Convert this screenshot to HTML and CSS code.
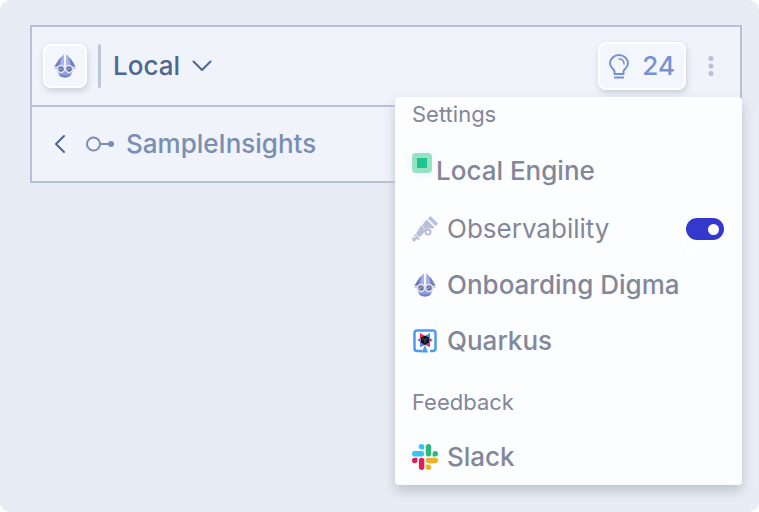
FILE: index.html
```html
<!DOCTYPE html>
<html lang="en">
<head>
<meta charset="utf-8">
<title>Digma</title>
<link rel="stylesheet" href="styles.css">
</head>
<body>
<svg class="sprite" aria-hidden="true">
  <symbol id="mascot" viewBox="0 0 26 26">
    <path d="M12 1.500 7 6 4 11l-2 4 4 2 6-2zM14.500 1.500 19 6l3 5 2 4-4 2-6-2z" fill="#929fdf"/>
    <path d="M8.500 5 4 11l-2 4 5-1zM18 5l4 6 2 4-5-1z" fill="#727db5"/>
    <path d="M11 2.500 8.500 13H12V1.500zM15.500 2.500 18 13h-3.500V1.500z" fill="#aab5ee"/>
    <path d="M5 17q8-4 16 0l-2 5q-6 5-12 0z" fill="#8e9ce0"/>
    <path d="M7 21.500q6 2 12 0-1 3-6 3t-6-3z" fill="#7480c2"/>
    <path d="M2 14.500h22" stroke="#e3e7f5" stroke-width="1.500"/>
    <circle cx="9" cy="16" r="3.500" fill="#6873a5" stroke="#e3e7f5" stroke-width="1.500"/>
    <circle cx="17" cy="16" r="3.500" fill="#6873a5" stroke="#e3e7f5" stroke-width="1.500"/>
    <path d="M7 17l3-2M15 17l3-2" stroke="#b3bde0"/>
  </symbol>
</svg>
<main class="stage">
  <section class="panel">
    <header class="row top-row">
      <button class="tile" aria-label="Digma"><svg class="icon"><use href="#mascot"/></svg></button>
      <span class="divider"></span>
      <button class="env">Local
        <svg width="20" height="12" viewBox="0 0 20 12" fill="none" stroke="currentColor" stroke-width="2" stroke-linecap="round" stroke-linejoin="round"><path d="M1.500 1.500 10 10l8.500-8.500"/></svg>
      </button>
      <button class="insights">
        <svg width="20" height="25" viewBox="0 0 20 25" fill="none" stroke="currentColor" stroke-width="2"><path d="M5.500 20v-2.500C5.500 15 1 14 1 9.500a9 8.500 0 0 1 18 0c0 4.500-4.500 5.500-4.500 8V20z" stroke-linejoin="round"/><path d="M10 5c3 0 5 2 5 5" stroke-width="1.500" stroke-linecap="round"/><path d="M5 23.500h10"/></svg>
        24
      </button>
      <button class="dots" aria-label="More"><svg width="6" height="20" viewBox="0 0 6 20" fill="currentColor"><circle cx="3" cy="2.500" r="2.500"/><circle cx="3" cy="10" r="2.500"/><circle cx="3" cy="17.500" r="2.500"/></svg></button>
    </header>
    <nav class="row path-row">
      <button class="back" aria-label="Back"><svg width="12" height="20" viewBox="0 0 12 20" fill="none" stroke="currentColor" stroke-width="2" stroke-linecap="round" stroke-linejoin="round"><path d="M10 2 2 10l8 8"/></svg></button>
      <a class="scope" href="#">
        <svg width="28" height="16" viewBox="0 0 28 16" fill="none" stroke="currentColor" stroke-width="2"><circle cx="7.500" cy="8" r="6.500"/><path d="M14 8h11"/><circle cx="25" cy="8" r="3" fill="currentColor" stroke="none"/></svg>
        SampleInsights
      </a>
    </nav>
    <aside class="menu">
      <h2 class="heading">Settings</h2>
      <button class="item engine"><span class="status"></span>Local Engine</button>
      <label class="item light">
        <svg class="icon" viewBox="0 0 26 26" fill="#b8bfd8"><path d="M18.500 0 26 7.500 23.500 10 16 2.500zM14.500 3.500l8 8-2.500 1.500a4.500 4.500 0 0 0-6 1l-4-4.500zM9 9.500l5 5-5 5.500-2 1-3-3 1-2zM3 18l5 5-1 1-2-1-3 3-2-2 1-1-1-1 1-1 2 1 1-1-2-1z"/><circle cx="16" cy="16" r="2.500" fill="none" stroke="#b8bfd8" stroke-width="2"/></svg>
        Observability
        <input class="toggle" type="checkbox" checked>
      </label>
      <button class="item"><svg class="icon"><use href="#mascot"/></svg>Onboarding Digma</button>
      <button class="item">
        <svg class="icon" viewBox="0 0 26 26"><path d="M10 23H5a2.500 2.500 0 0 1-2.500-2.500V5A2.500 2.500 0 0 1 5 2.500h16A2.500 2.500 0 0 1 23.500 5v15.500A2.500 2.500 0 0 1 21 23h-3" fill="none" stroke="#4c9aee" stroke-width="2.500"/><path d="m13 17 3 7.500H9.500z" fill="#4c9aee"/><path d="m8 5 5 3v9l-5 2v-5l-2-2 2-2z" fill="#ff2458"/><path d="m18 5-5 3v9l5 2v-5l2-2-2-2z" fill="#4695eb"/><path d="m5 12 5-2v4zM8 19v-5l4 3zM18 5v5l-4-2z" fill="#4695eb"/><path d="m21 12-5-2v4zM18 19v-5l-4 3z" fill="#ff2458"/><path d="m13 7.500 4 2v5l-4 2.500-4-2.500v-5z" fill="#10131f"/><path d="m10 10.500 3 1.500 3-1.500M13 12v3" stroke="#4a5062" fill="none"/></svg>
        Quarkus
      </button>
      <h2 class="heading feedback">Feedback</h2>
      <button class="item">
        <svg class="icon" viewBox="0 0 26 26"><g fill="#36c5f0"><path d="M9.500 0a2.700 2.700 0 1 0 0 5.400h2.700V2.700A2.700 2.700 0 0 0 9.500 0z"/><rect y="7" width="12.200" height="5.400" rx="2.700"/></g><g fill="#2eb67d"><path d="M26 9.700a2.700 2.700 0 1 0-5.400 0v2.700h2.700A2.700 2.700 0 0 0 26 9.700z"/><rect x="13.800" width="5.400" height="12.400" rx="2.700"/></g><g fill="#ecb22e"><path d="M16.500 26a2.700 2.700 0 1 0 0-5.400h-2.700v2.700a2.700 2.700 0 0 0 2.700 2.700z"/><rect x="13.800" y="13.800" width="12.200" height="5.400" rx="2.700"/></g><g fill="#e01e5a"><path d="M0 16.500a2.700 2.700 0 1 0 5.400 0v-2.700H2.700A2.700 2.700 0 0 0 0 16.500z"/><rect x="6.900" y="13.800" width="5.400" height="12.200" rx="2.700"/></g></svg>
        Slack
      </button>
      <svg class="pointer" width="24" height="24" viewBox="0 0 24 24" fill="none" stroke="#ffffff" stroke-width="2" stroke-linejoin="round"><path d="m2 2 20 7-9 3-4 9z"/></svg>
    </aside>
  </section>
</main>
</body>
</html>
```

FILE: styles.css
```css
* { box-sizing: border-box; }

body {
  margin: 0;
  background: #fff;
  font-family: Inter, "Liberation Sans", sans-serif;
}

button {
  margin: 0;
  padding: 0;
  border: 0;
  background: none;
  color: inherit;
  font: inherit;
}

svg { flex: none; }

.sprite { position: absolute; width: 0; height: 0; }

.stage {
  min-height: 100vh;
  padding: 25px 17px 24px 30px;
  border-radius: 10px;
  background: #e8ecf4;
}

.panel {
  position: relative;
  border: 2px solid #b8bfd8;
  background: #f0f3f9;
  font-size: 26px;
  font-weight: 500;
  line-height: 32px;
}

.row { display: flex; align-items: center; }

.top-row {
  height: 80px;
  padding: 0 26px 0 11px;
  border-bottom: 2px solid #b8bfd8;
  color: #4d6890;
}

.path-row {
  height: 74px;
  padding-left: 22px;
  gap: 20px;
  color: #788eb2;
}

.tile,
.insights {
  display: flex;
  align-items: center;
  justify-content: center;
  border: 2px solid #fff;
  border-radius: 8px;
  background: #f3f6fb;
  box-shadow: 1px 3px 6px #c9cfda;
}

.tile { width: 44px; height: 44px; }

.divider {
  width: 3px;
  height: 44px;
  margin: 0 12px 0 11px;
  border-radius: 2px;
  background: #bfc6dc;
}

.env { display: flex; align-items: center; gap: 12px; }

.insights {
  gap: 13px;
  height: 48px;
  margin-left: auto;
  padding: 0 9px;
  color: #7691d4;
}

.dots { display: flex; margin-left: 22px; color: #b8bfd8; }
.back { display: flex; color: #4d6890; }

.scope {
  display: flex;
  align-items: center;
  gap: 12px;
  color: inherit;
  text-decoration: none;
}

.menu {
  position: absolute;
  top: 70px;
  right: -2px;
  width: 347px;
  border-radius: 4px;
  background: #fcfdff;
  box-shadow: 0 6px 12px #bfc5ce;
  color: #828799;
}

.heading {
  margin: 0 0 10px;
  padding: 0 17px;
  font-size: 22px;
  font-weight: 400;
  line-height: 34px;
}

.feedback { margin-top: 16px; }

.item {
  display: flex;
  align-items: center;
  gap: 9px;
  width: 100%;
  height: 56px;
  padding: 0 18px 0 17px;
  text-align: left;
}

.engine { height: 60px; gap: 4px; }
.light { font-weight: 400; }
.icon { width: 26px; height: 26px; }

.status {
  width: 20px;
  height: 20px;
  margin-bottom: 16px;
  border: 5px solid #94e4c4;
  border-radius: 4px;
  background: #1fc48e;
  box-shadow: 0 0 12px #eaf7ff;
}

.toggle {
  appearance: none;
  display: flex;
  align-items: center;
  justify-content: flex-end;
  width: 38px;
  height: 22px;
  margin: 0 0 0 auto;
  padding: 0 5px;
  border-radius: 11px;
  background: #3538cd;
}

.toggle::before {
  content: "";
  width: 11px;
  height: 11px;
  border-radius: 50%;
  background: #fff;
}

.toggle:not(:checked) { justify-content: flex-start; }

.pointer { position: absolute; top: 139px; right: 37px; }
```
